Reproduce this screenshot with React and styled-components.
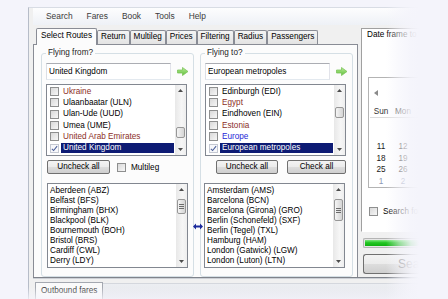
import React from "react";
import styled, { createGlobalStyle } from "styled-components";

const BG = "#f4f4fb";

const GlobalStyle = createGlobalStyle`
  * { box-sizing: border-box; }
  html, body { margin: 0; padding: 0; background: ${BG}; overflow: hidden; }
  body {
    font-family: "Liberation Sans", Arial, sans-serif;
    font-size: 8.2px;
    color: #000;
  }
`;

const Page = styled.div`
  position: relative;
  width: 448px;
  height: 299px;
  overflow: hidden;
  padding: 7px 0 0 28px;
`;

const Window = styled.div`
  width: 420px;
  height: 300px;
  padding-left: 4px;
  background: #f0f0f0;
  border-left: 1px solid #b6bcc8;
  border-top: 1px solid #d8dce4;
`;

const MenuBar = styled.div`
  display: flex;
  height: 17px;
  padding-left: 6px;
  background: linear-gradient(#fdfdfe, #eef1f6);
`;

const MenuItem = styled.div`
  padding: 0 7px;
  line-height: 17px;
  font-size: 8.4px;
  color: #3b3b3b;
`;

const Main = styled.div`
  display: flex;
  align-items: flex-start;
  margin-top: 3px;
  border-bottom: 1px solid #7f838b;
  box-shadow: 0 1px 0 #cdd0d6;
`;

const TabControl = styled.div`
  width: 325px;
  display: flex;
  flex-direction: column;
`;

const TabStrip = styled.div`
  display: flex;
  align-items: flex-end;
  height: 16px;
  padding-left: 3px;
`;

const Tab = styled.div`
  position: relative;
  z-index: ${(p) => (p.$active ? 1 : 0)};
  height: ${(p) => (p.$active ? 17 : 14)}px;
  margin-bottom: ${(p) => (p.$active ? -1 : 0)}px;
  padding: 0 ${(p) => (p.$active ? 4 : 3)}px;
  border: 1px solid #898c95;
  border-bottom: none;
  border-radius: 2px 2px 0 0;
  line-height: ${(p) => (p.$active ? 14 : 12)}px;
  background: ${(p) => (p.$active ? "#fcfcfc" : "linear-gradient(#f4f4f4, #e3e3e3)")};
  white-space: nowrap;
`;

const TabPanel = styled.div`
  position: relative;
  height: 233px;
  display: flex;
  gap: 6px;
  padding: 3px 0 0 7px;
  border: 1px solid #898c95;
  border-bottom: none;
  background: #fcfcfc;
`;

const Group = styled.fieldset`
  width: 153px;
  min-width: 0;
  margin: 0;
  padding: 0 0 1px 4px;
  border: 1px solid #d5dfe5;
  border-radius: 3px;
`;

const Legend = styled.legend`
  padding: 0 2px;
  line-height: 10px;
  color: #1e1e1e;
`;

const InputRow = styled.div`
  display: flex;
  align-items: center;
  gap: 6px;
  margin-top: 5px;
`;

const TextBox = styled.div`
  width: 125px;
  height: 17px;
  padding-left: 2px;
  line-height: 15px;
  background: #fff;
  border: 1px solid;
  border-color: #abadb3 #e2e3ea #e3e9ef #dbdfe6;
`;

const ListBox = styled.div`
  display: flex;
  width: ${(p) => p.$width || 141}px;
  height: ${(p) => p.$height}px;
  margin-top: ${(p) => p.$top}px;
  margin-left: ${(p) => p.$left || 0}px;
  background: #fff;
  border: 1px solid #828790;
`;

const Items = styled.div`
  flex: 1;
  padding-top: ${(p) => p.$pad}px;
  overflow: hidden;
`;

const CheckRow = styled.div`
  display: flex;
  align-items: center;
  height: 11.3px;
  padding-left: 3px;
`;

const toneColor = { city: "#000", country: "#8c2f1f", region: "#2727d6" };

const RowLabel = styled.div`
  flex: 1;
  height: 10px;
  margin: 0 1px 0 2px;
  padding-left: 2px;
  line-height: 10px;
  white-space: nowrap;
  color: ${(p) => (p.$selected ? "#fff" : toneColor[p.$tone])};
  background: ${(p) => (p.$selected ? "#0d1b74" : "transparent")};
`;

const Box = styled.span`
  display: inline-flex;
  align-items: center;
  justify-content: center;
  flex: none;
  width: 9px;
  height: 9px;
  border: 1px solid ${(p) => (p.$checked ? "#c4c8d2" : "#8e8f8f")};
  background: ${(p) =>
    p.$checked ? "#f7f8fb" : "linear-gradient(135deg, #d9d9d9, #f7f7f7)"};
`;

const AirportItem = styled.div`
  height: 10px;
  padding-left: 2px;
  line-height: 10px;
  white-space: nowrap;
`;

const ScrollBar = styled.div`
  display: flex;
  flex-direction: column;
  width: 11px;
  background: linear-gradient(90deg, #e8e8e8, #f6f6f6 60%, #eeeeee);
`;

const ScrollArrow = styled.div`
  display: flex;
  align-items: center;
  justify-content: center;
  height: 11px;
`;

const Track = styled.div`
  flex: 1;
`;

const Thumb = styled.div`
  display: flex;
  flex-direction: column;
  align-items: center;
  justify-content: center;
  gap: 1px;
  width: 9px;
  height: ${(p) => p.$height}px;
  margin: ${(p) => p.$top}px 0 0 1px;
  border: 1px solid #979797;
  border-radius: 2px;
  background: linear-gradient(90deg, #f5f5f5, #e4e4e4 50%, #d5d5d5);
`;

const Grip = styled.span`
  width: 5px;
  height: 1px;
  background: #6b6b6b;
`;

const ButtonRow = styled.div`
  display: flex;
  align-items: center;
  height: 14px;
  margin-top: 4px;
  padding-left: ${(p) => p.$indent}px;
`;

const Button = styled.div`
  width: ${(p) => p.$width}px;
  height: 14px;
  margin-right: ${(p) => p.$gap || 0}px;
  line-height: 12px;
  text-align: center;
  border: 1px solid #707070;
  border-radius: 2px;
  background: linear-gradient(#f3f3f3, #ebebeb 50%, #dddddd 50%, #cfcfcf);
`;

const InlineCheck = styled.label`
  display: flex;
  align-items: center;
  gap: 5px;
  margin-left: ${(p) => p.$left}px;
`;

const SwapArrow = styled.svg`
  position: absolute;
  left: 159px;
  top: 178px;
`;

const SidePane = styled.div`
  width: 87px;
  margin-left: 3px;
  display: flex;
  flex-direction: column;
`;

const DatePanel = styled.div`
  height: 204px;
  padding: 1px 0 0 5px;
  overflow: hidden;
  background: #fff;
  border: 1px solid;
  border-color: #a0a0a0 #ffffff #ffffff #a0a0a0;
`;

const PanelTitle = styled.div`
  line-height: 10px;
  white-space: nowrap;
`;

const Calendar = styled.div`
  height: 111px;
  margin: 37px 0 0 1px;
  border: 1px solid #b3b3b3;
  border-right: none;
  background: #fff;
`;

const NavRow = styled.div`
  height: 12px;
  margin-top: 9px;
  padding-left: 5px;
  display: flex;
  align-items: center;
`;

const WeekGrid = styled.div`
  display: grid;
  grid-template-columns: repeat(3, 22px);
  margin-left: 1px;
`;

const DayHead = styled(WeekGrid)`
  margin-top: 8px;
  height: 11px;
  line-height: 10px;
  color: #333;
  border-bottom: 1px solid #dcdcdc;
`;

const DayName = styled.div`
  text-align: center;
`;

const DateCell = styled.div`
  height: 11.5px;
  line-height: 11.5px;
  text-align: center;
  color: ${(p) => (p.$muted ? "#8d97b3" : "#1a1a1a")};
`;

const CheckLine = styled.label`
  display: flex;
  align-items: center;
  gap: 5px;
  margin: 19px 0 0 2px;
  white-space: nowrap;
`;

const Progress = styled.div`
  height: 10px;
  margin: 6px 0 0 2px;
  padding: 1px;
  border: 1px solid #b4b4b4;
  border-right: none;
  border-radius: 2px 0 0 2px;
  background: #e6e6e6;
`;

const ProgressFill = styled.div`
  height: 100%;
  background: linear-gradient(#7fe87f, #22c622 45%, #10b010);
`;

const SearchButton = styled.div`
  height: 20px;
  margin: 6px 0 0 2px;
  padding-left: 34px;
  line-height: 18px;
  font-size: 12px;
  color: #6d6d6d;
  border: 1px solid #707070;
  border-right: none;
  border-radius: 3px 0 0 3px;
  background: linear-gradient(#f3f3f3, #ebebeb 50%, #dddddd 50%, #cfcfcf);
`;

const BottomTabs = styled.div`
  display: flex;
  height: 17px;
  margin-top: 4px;
  padding-left: 2px;
`;

const BottomTab = styled.div`
  padding: 0 5px;
  line-height: 15px;
  color: #333;
  background: #fafafa;
  border: 1px solid #a4a8b0;
  border-bottom: none;
`;

const BottomFill = styled.div`
  flex: 1;
  margin-top: 1px;
  border-top: 1px solid #d4d7dd;
  background: linear-gradient(#eceef2, #e3e5ea);
`;

const RightFade = styled.div`
  position: absolute;
  top: 0;
  bottom: 0;
  left: 386px;
  right: 0;
  background: linear-gradient(
    90deg,
    rgba(244, 244, 251, 0) 0,
    rgba(244, 244, 251, 0.55) 13px,
    rgba(244, 244, 251, 0.9) 25px,
    ${BG} 33px
  );
`;

const BottomFade = styled.div`
  position: absolute;
  left: 0;
  right: 0;
  bottom: 0;
  height: 12px;
  background: linear-gradient(rgba(244, 244, 251, 0), rgba(244, 244, 251, 0.75));
`;

const Tick = () => (
  <svg width="8" height="7" viewBox="0 0 8 7">
    <path d="M1 3.8 L3 5.8 L7 0.8" fill="none" stroke="#4b5f99" strokeWidth="1.2" />
  </svg>
);

const CheckBox = ({ checked }) => <Box $checked={checked}>{checked && <Tick />}</Box>;

const Triangle = ({ down, left, color = "#4d4d4d" }) => {
  if (left) {
    return (
      <svg width="4" height="6" viewBox="0 0 4 6">
        <path d="M4 0 L0 3 L4 6 Z" fill={color} />
      </svg>
    );
  }
  return (
    <svg width="5" height="3" viewBox="0 0 5 3">
      <path d={down ? "M0 0 L5 0 L2.5 3 Z" : "M0 3 L5 3 L2.5 0 Z"} fill={color} />
    </svg>
  );
};

const GoArrow = () => (
  <svg width="12" height="9" viewBox="0 0 12 9">
    <defs>
      <linearGradient id="go" x1="0" y1="0" x2="0" y2="1">
        <stop offset="0" stopColor="#b9ec98" />
        <stop offset="1" stopColor="#5fbf3a" />
      </linearGradient>
    </defs>
    <path d="M0.5 3 H5.5 V0.5 L11 4.5 L5.5 8.5 V6 H0.5 Z" fill="url(#go)" stroke="#7cc45a" strokeWidth="0.8" />
  </svg>
);

const ScrollColumn = ({ thumbTop, thumbHeight, grip }) => (
  <ScrollBar>
    <ScrollArrow>
      <Triangle />
    </ScrollArrow>
    <Track>
      <Thumb $top={thumbTop} $height={thumbHeight}>
        {grip && (
          <>
            <Grip />
            <Grip />
            <Grip />
          </>
        )}
      </Thumb>
    </Track>
    <ScrollArrow>
      <Triangle down />
    </ScrollArrow>
  </ScrollBar>
);

const fromPlaces = [
  { name: "Ukraine", tone: "country" },
  { name: "Ulaanbaatar (ULN)", tone: "city" },
  { name: "Ulan-Ude (UUD)", tone: "city" },
  { name: "Umea (UME)", tone: "city" },
  { name: "United Arab Emirates", tone: "country" },
  { name: "United Kingdom", tone: "country", checked: true },
];

const toPlaces = [
  { name: "Edinburgh (EDI)", tone: "city" },
  { name: "Egypt", tone: "country" },
  { name: "Eindhoven (EIN)", tone: "city" },
  { name: "Estonia", tone: "country" },
  { name: "Europe", tone: "region" },
  { name: "European metropoles", tone: "region", checked: true },
];

const fromAirports = [
  "Aberdeen (ABZ)",
  "Belfast (BFS)",
  "Birmingham (BHX)",
  "Blackpool (BLK)",
  "Bournemouth (BOH)",
  "Bristol (BRS)",
  "Cardiff (CWL)",
  "Derry (LDY)",
];

const toAirports = [
  "Amsterdam (AMS)",
  "Barcelona (BCN)",
  "Barcelona (Girona) (GRO)",
  "Berlin (Schonefeld) (SXF)",
  "Berlin (Tegel) (TXL)",
  "Hamburg (HAM)",
  "London (Gatwick) (LGW)",
  "London (Luton) (LTN)",
];

const tabs = ["Select Routes", "Return", "Multileg", "Prices", "Filtering", "Radius", "Passengers"];

// only the first columns of the month view are in frame; past days are hidden
const days = ["Sun", "Mon", "Tue"];
const weeks = [
  [null, null, null],
  [null, null, null],
  [11, 12, 13],
  [18, 19, 20],
  [25, 26, 27],
  [1, 2, 3],
];

const PlaceList = ({ places, thumbTop }) => (
  <ListBox $height={72} $top={4}>
    <Items $pad={1}>
      {places.map((p) => (
        <CheckRow key={p.name}>
          <CheckBox checked={p.checked} />
          <RowLabel $tone={p.tone} $selected={p.checked}>
            {p.name}
          </RowLabel>
        </CheckRow>
      ))}
    </Items>
    <ScrollColumn thumbTop={thumbTop} thumbHeight={11} />
  </ListBox>
);

const AirportList = ({ airports, thumbHeight, left }) => (
  <ListBox $height={85} $top={9} $left={left}>
    <Items $pad={2}>
      {airports.map((a) => (
        <AirportItem key={a}>{a}</AirportItem>
      ))}
    </Items>
    <ScrollColumn thumbTop={4} thumbHeight={thumbHeight} grip />
  </ListBox>
);

export default function App() {
  return (
    <>
      <GlobalStyle />
      <Page>
        <Window>
          <MenuBar>
            {["Search", "Fares", "Book", "Tools", "Help"].map((m) => (
              <MenuItem key={m}>{m}</MenuItem>
            ))}
          </MenuBar>

          <Main>
            <TabControl>
              <TabStrip>
                {tabs.map((t, i) => (
                  <Tab key={t} $active={i === 0}>
                    {t}
                  </Tab>
                ))}
              </TabStrip>
              <TabPanel>
                <Group>
                  <Legend>Flying from?</Legend>
                  <InputRow>
                    <TextBox>United Kingdom</TextBox>
                    <GoArrow />
                  </InputRow>
                  <PlaceList places={fromPlaces} thumbTop={31} />
                  <ButtonRow $indent={1}>
                    <Button $width={63}>Uncheck all</Button>
                    <InlineCheck $left={7}>
                      <CheckBox />
                      Multileg
                    </InlineCheck>
                  </ButtonRow>
                  <AirportList airports={fromAirports} thumbHeight={15} left={1} />
                </Group>

                <Group>
                  <Legend>Flying to?</Legend>
                  <InputRow>
                    <TextBox>European metropoles</TextBox>
                    <GoArrow />
                  </InputRow>
                  <PlaceList places={toPlaces} thumbTop={11} />
                  <ButtonRow $indent={11}>
                    <Button $width={62} $gap={9}>
                      Uncheck all
                    </Button>
                    <Button $width={59}>Check all</Button>
                  </ButtonRow>
                  <AirportList airports={toAirports} thumbHeight={22} left={-1} />
                </Group>

                <SwapArrow width="10" height="7" viewBox="0 0 10 7">
                  <path d="M0 3.5 L3 0.5 V2.5 H7 V0.5 L10 3.5 L7 6.5 V4.5 H3 V6.5 Z" fill="#1b2a9c" />
                </SwapArrow>
              </TabPanel>
            </TabControl>

            <SidePane>
              <DatePanel>
                <PanelTitle>Date frame to</PanelTitle>
                <Calendar>
                  <NavRow>
                    <Triangle left color="#8a8a8a" />
                  </NavRow>
                  <DayHead>
                    {days.map((d) => (
                      <DayName key={d}>{d}</DayName>
                    ))}
                  </DayHead>
                  <WeekGrid>
                    {weeks.map((w, r) =>
                      w.map((d, c) => (
                        <DateCell key={`${r}-${c}`} $muted={r === 5}>
                          {d}
                        </DateCell>
                      ))
                    )}
                  </WeekGrid>
                </Calendar>
                <CheckLine>
                  <CheckBox />
                  Search for
                </CheckLine>
              </DatePanel>
              <Progress>
                <ProgressFill />
              </Progress>
              <SearchButton>Search</SearchButton>
            </SidePane>
          </Main>

          <BottomTabs>
            <BottomTab>Outbound fares</BottomTab>
            <BottomFill />
          </BottomTabs>
        </Window>
        <RightFade />
        <BottomFade />
      </Page>
    </>
  );
}
